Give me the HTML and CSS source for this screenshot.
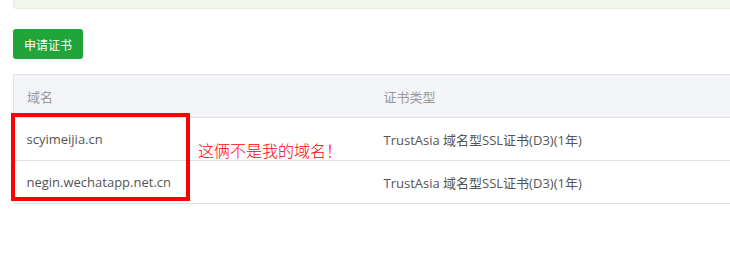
FILE: index.html
```html
<!DOCTYPE html>
<html lang="zh-CN">
<head>
    <meta charset="UTF-8">
    <title>SSL证书</title>
    <link rel="stylesheet" href="styles.css">
</head>
<body>
    <div class="page">
        <div class="notice"></div>

        <button class="btn-green">申请证书</button>

        <div class="table-wrap">
            <table class="cert-table">
                <thead>
                    <tr>
                        <th class="col-domain">域名</th>
                        <th>证书类型</th>
                    </tr>
                </thead>
                <tbody>
                    <tr>
                        <td>scyimeijia.cn</td>
                        <td>TrustAsia 域名型SSL证书(D3)(1年)</td>
                    </tr>
                    <tr>
                        <td>negin.wechatapp.net.cn</td>
                        <td>TrustAsia 域名型SSL证书(D3)(1年)</td>
                    </tr>
                </tbody>
            </table>

            <div class="mark-box"></div>
            <div class="mark-text">这俩不是我的域名！</div>
        </div>
    </div>
</body>
</html>
```

FILE: styles.css
```css
* {
    margin: 0;
    padding: 0;
    box-sizing: border-box;
}

body {
    width: 730px;
    height: 256px;
    overflow: hidden;
    background: #fff;
    font-family: "Open Sans", "Noto Sans CJK SC", sans-serif;
    font-size: 13px;
    color: #666;
}

.page {
    padding-left: 13px;
}

.notice {
    width: 717px;
    height: 9px;
    background: #f1f6ed;
    border: 1px solid #e2eedb;
    border-top: none;
    border-right: none;
    border-radius: 0 0 0 4px;
}

.btn-green {
    display: block;
    margin-top: 20px;
    width: 70px;
    height: 30px;
    background: #20a53a;
    border: none;
    border-radius: 3px;
    color: #fff;
    font-family: "Noto Sans CJK SC", sans-serif;
    font-size: 12px;
}

.table-wrap {
    position: relative;
    margin-top: 15px;
    width: 717px;
}

.cert-table {
    width: 100%;
    table-layout: fixed;
    border-collapse: collapse;
    text-align: left;
}

.cert-table th {
    height: 43px;
    padding: 0 13px;
    background: #f4f5f9;
    border-top: 1px solid #e1e1e1;
    border-bottom: 1px solid #e1e1e1;
    font-weight: normal;
    color: #999;
    white-space: nowrap;
}

.cert-table th:first-child {
    border-left: 1px solid #e1e1e1;
}

.cert-table .col-domain {
    width: 357px;
}

.cert-table td {
    height: 43px;
    padding: 0 13px;
    border-bottom: 1px solid #e1e1e1;
    color: #555;
    white-space: nowrap;
}

.mark-box {
    position: absolute;
    left: -2px;
    top: 39px;
    width: 179px;
    height: 88px;
    border: 4px solid #f00;
}

.mark-text {
    position: absolute;
    left: 185px;
    top: 64px;
    font-family: "Noto Sans CJK SC", sans-serif;
    font-size: 16px;
    font-weight: 300;
    color: #f00;
}
```
